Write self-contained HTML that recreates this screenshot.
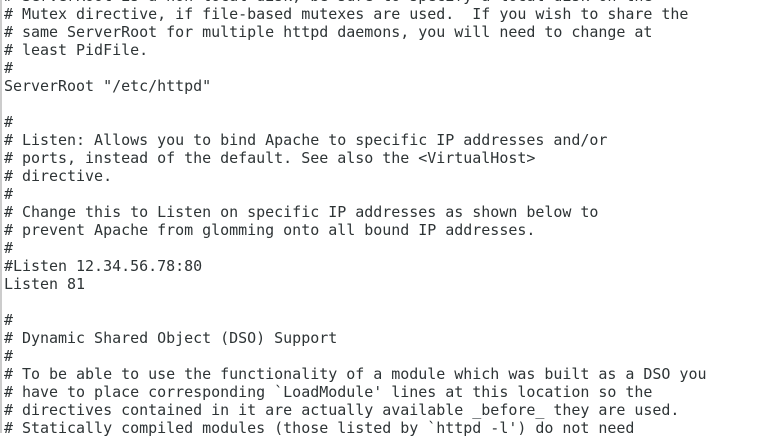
<html><head><style>
body{margin:0;width:779px;height:433px;overflow:hidden;background:#fff;}
pre{margin:0;position:absolute;left:4px;top:-13px;font-family:"DejaVu Sans Mono","Liberation Mono",monospace;font-size:15px;line-height:18px;letter-spacing:-0.025px;color:#2e3436;}
.b{position:absolute;left:0;top:0;width:2px;height:433px;background:#ccc;}
</style></head><body><div class="b"></div><pre># ServerRoot is a non-local disk, be sure to specify a local disk on the
# Mutex directive, if file-based mutexes are used.  If you wish to share the
# same ServerRoot for multiple httpd daemons, you will need to change at
# least PidFile.
#
ServerRoot "/etc/httpd"

#
# Listen: Allows you to bind Apache to specific IP addresses and/or
# ports, instead of the default. See also the &lt;VirtualHost&gt;
# directive.
#
# Change this to Listen on specific IP addresses as shown below to
# prevent Apache from glomming onto all bound IP addresses.
#
#Listen 12.34.56.78:80
Listen 81

#
# Dynamic Shared Object (DSO) Support
#
# To be able to use the functionality of a module which was built as a DSO you
# have to place corresponding `LoadModule' lines at this location so the
# directives contained in it are actually available _before_ they are used.
# Statically compiled modules (those listed by `httpd -l') do not need
</pre></body></html>
